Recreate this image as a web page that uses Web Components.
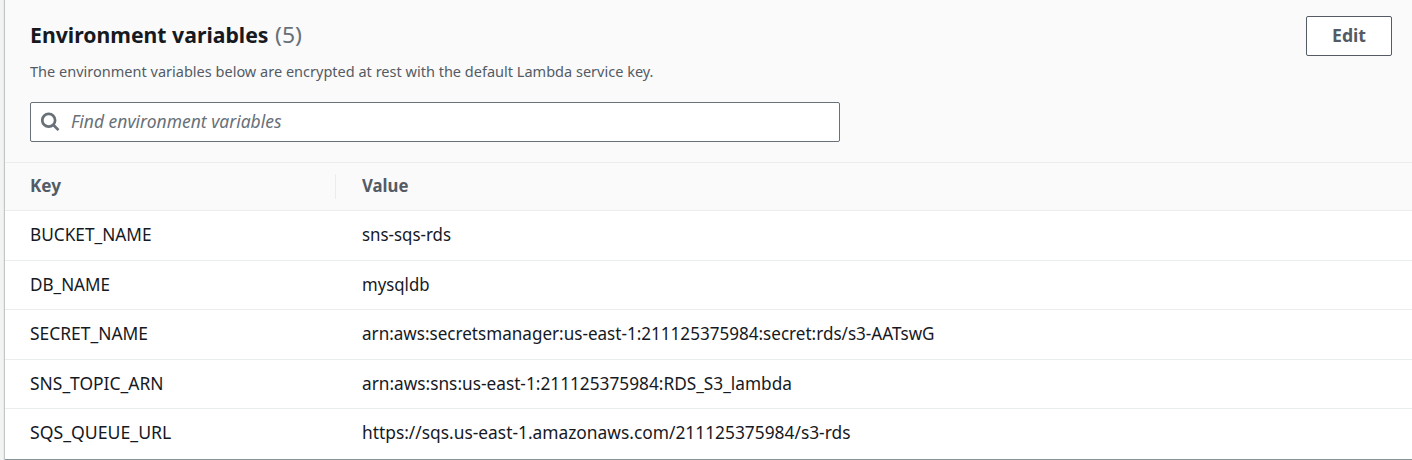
<!DOCTYPE html>
<html lang="en"><head><meta charset="utf-8"><title>Environment variables</title>
<style>
html,body{margin:0;height:460px;overflow:hidden;background:#f2f3f3}
body{font-family:"Noto Sans","Open Sans",sans-serif;color:#16191f}
</style></head><body>
<env-panel></env-panel>
<script>
// Single line of text condensed or widened to a given measure.
class FitText extends HTMLElement{
  connectedCallback(){
    const r=this.attachShadow({mode:'open'});
    r.innerHTML=`<style>:host{display:block;width:var(--w);white-space:nowrap}span{display:inline-block;transform-origin:0 50%}</style><span><slot></slot></span>`;
    const w=+this.getAttribute('width');
    this.style.setProperty('--w',w+'px');
    const s=r.querySelector('span');
    s.style.transform=`scaleX(${w/s.getBoundingClientRect().width})`;
  }
}
class SearchField extends HTMLElement{
  connectedCallback(){
    this.attachShadow({mode:'open'}).innerHTML=`<style>
    :host{display:flex;align-items:center;box-sizing:border-box;width:810px;height:40px;border:1px solid #687078;border-radius:2px;background:#fff;color:#687078;font-size:17.3px;line-height:24px;font-style:italic;padding-left:10px}
    svg{display:block;width:20px;height:20px;margin-right:9.5px}
    </style><svg viewBox="0 0 20 20" fill="none" stroke="#687078" stroke-width="2.7"><circle cx="7.7" cy="8.3" r="6.4"/><path d="M12.2 12.8l5.3 5.3"/></svg><fit-text width="210.5">Find environment variables</fit-text>`;
  }
}
class ActionButton extends HTMLElement{
  connectedCallback(){
    this.attachShadow({mode:'open'}).innerHTML=`<style>:host{display:flex;justify-content:center;box-sizing:border-box;width:86px;height:40px;border:1px solid #545b64;border-radius:2px;background:#fff;color:#545b64;font-weight:700;font-size:17px;line-height:38px}</style><slot></slot>`;
  }
}
class EnvRow extends HTMLElement{
  connectedCallback(){
    this.attachShadow({mode:'open'}).innerHTML=`<style>
    :host{display:grid;grid-template-columns:331px 1fr;box-sizing:border-box;height:var(--h,50px);border-bottom:1px solid #eaeded;background:#fff;font-size:17.3px;line-height:24px}
    :host([head]){background:#fafafa;color:#545b64;font-weight:700}
    div{padding:12px 0 0 25px}
    .v{padding-left:26px}
    :host([head]) div{padding-top:11px}
    .k{position:relative}
    :host([head]) .k::after{content:"";position:absolute;right:0;top:11px;height:25px;width:1px;background:#eaeded}
    </style><div class="k"><slot name="key"></slot></div><div class="v"><slot name="value"></slot></div>`;
  }
}
class EnvPanel extends HTMLElement{
  connectedCallback(){
    const rows=[['BUCKET_NAME',121.5,'sns-sqs-rds',89,50],['DB_NAME',80,'mysqldb',67.5,49],['SECRET_NAME',118,'arn:aws:secretsmanager:us-east-1:211125375984:secret:rds/s3-AATswG',572.5,50],['SNS_TOPIC_ARN',133.5,'arn:aws:sns:us-east-1:211125375984:RDS_S3_lambda',430,49],['SQS_QUEUE_URL',141.3,'https://sqs.us-east-1.amazonaws.com/211125375984/s3-rds',488.5,51]];
    this.attachShadow({mode:'open'}).innerHTML=`<style>
    :host{display:block;box-sizing:border-box;height:460px;margin-left:4px;border-left:1px solid #c1c7c9;background:#fafafa;box-shadow:-1px 0 0 #e8eaeb}
    header{box-sizing:border-box;height:163px;border-bottom:1px solid #eaeded;padding:16px 20px 0 25px;display:flex;justify-content:space-between}
    .title{display:flex;gap:6px;height:36px;font-size:22px;line-height:36px}
    .title .name{font-weight:700}.count{color:#687078}
    .desc{font-size:14.5px;line-height:22px;color:#545b64;margin:8px 0 20px}
    env-row:last-child{border-bottom-color:#879596}
    </style><header><div><div class="title"><fit-text class="name" width="238.5">Environment variables</fit-text><fit-text class="count" width="27">(5)</fit-text></div>
    <fit-text class="desc" width="623.5">The environment variables below are encrypted at rest with the default Lambda service key.</fit-text><search-field></search-field></div>
    <action-button><fit-text width="34">Edit</fit-text></action-button></header>
    <main><env-row head style="--h:48px"><fit-text slot="key" width="31">Key</fit-text><fit-text slot="value" width="46.5">Value</fit-text></env-row>${rows.map(r=>`<env-row style="--h:${r[4]}px"><fit-text slot="key" width="${r[1]}">${r[0]}</fit-text><fit-text slot="value" width="${r[3]}">${r[2]}</fit-text></env-row>`).join('')}</main>`;
  }
}
customElements.define('search-field',SearchField);
customElements.define('action-button',ActionButton);
customElements.define('env-row',EnvRow);
customElements.define('env-panel',EnvPanel);
customElements.define('fit-text',FitText);
</script></body></html>
